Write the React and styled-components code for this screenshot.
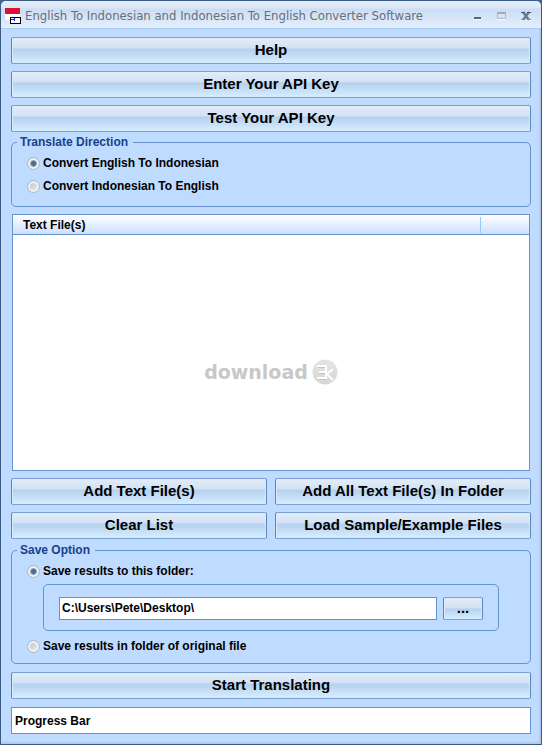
import React, { useState } from 'react'
import styled, { createGlobalStyle } from 'styled-components'

const App = () => {
  const [direction, setDirection] = useState('en-id')
  const [saveMode, setSaveMode] = useState('folder')
  const [folder, setFolder] = useState('C:\\Users\\Pete\\Desktop\\')

  return (
    <>
      <GlobalStyle />
      <Window>
        <TitleBar>
          <FlagIcon />
          <Title>English To Indonesian and Indonesian To English Converter Software</Title>
          <WindowButtons />
        </TitleBar>
        <Content>
          <Stack>
            <Button type='button'>Help</Button>
            <Button type='button'>Enter Your API Key</Button>
            <Button type='button'>Test Your API Key</Button>
          </Stack>

          <DirectionGroup>
            <legend>Translate Direction</legend>
            <RadioLabel>
              <input type='radio' name='direction' checked={direction === 'en-id'} onChange={() => setDirection('en-id')} />
              Convert English To Indonesian
            </RadioLabel>
            <RadioLabel>
              <input type='radio' name='direction' checked={direction === 'id-en'} onChange={() => setDirection('id-en')} />
              Convert Indonesian To English
            </RadioLabel>
          </DirectionGroup>

          <FileList>
            <FileTable>
              <thead>
                <tr>
                  <th scope='col'><span>Text File(s)</span></th>
                  <td />
                </tr>
              </thead>
            </FileTable>
            <Watermark>
              download
              <WatermarkBadge />
            </Watermark>
          </FileList>

          <ButtonGrid>
            <Button type='button'>Add Text File(s)</Button>
            <Button type='button'>Add All Text File(s) In Folder</Button>
            <Button type='button'>Clear List</Button>
            <Button type='button'>Load Sample/Example Files</Button>
          </ButtonGrid>

          <SaveGroup>
            <legend>Save Option</legend>
            <RadioLabel>
              <input type='radio' name='save' checked={saveMode === 'folder'} onChange={() => setSaveMode('folder')} />
              Save results to this folder:
            </RadioLabel>
            <FolderBox>
              <TextInput aria-label='Folder' value={folder} onChange={(e) => setFolder(e.target.value)} />
              <BrowseButton type='button' aria-label='Browse'>...</BrowseButton>
            </FolderBox>
            <RadioLabel>
              <input type='radio' name='save' checked={saveMode === 'original'} onChange={() => setSaveMode('original')} />
              Save results in folder of original file
            </RadioLabel>
          </SaveGroup>

          <Button type='button'>Start Translating</Button>
          <Progress>Progress Bar</Progress>
        </Content>
      </Window>
    </>
  )
}

const FlagIcon = () => (
  <svg width='16' height='16' viewBox='0 0 16 16' shapeRendering='crispEdges' aria-hidden='true'>
    <rect width='15' height='6' fill='#d8142f' />
    <rect y='6' width='15' height='6' fill='#ffffff' />
    <rect x='5.5' y='9.5' width='10' height='6' fill='#ffffff' stroke='#000000' />
    <path d='M6 11.5h3M9.5 10v3' stroke='#1414e6' />
  </svg>
)

const WindowButtons = () => (
  <Controls>
    <button type='button' aria-label='Minimize'>
      <svg width='10' height='10' viewBox='0 0 10 10' shapeRendering='crispEdges'>
        <rect x='1' y='6' width='7' height='2' fill='#53657c' />
        <rect x='1' y='8' width='7' height='1' fill='#ffffff' />
      </svg>
    </button>
    <button type='button' aria-label='Maximize'>
      <svg width='10' height='10' viewBox='0 0 10 10' shapeRendering='crispEdges'>
        <rect x='0.5' y='1.5' width='8' height='6' fill='#d9e3f1' stroke='#b0b9c8' />
        <rect y='1' width='9' height='2' fill='#a5abb8' />
        <rect y='8' width='9' height='1' fill='#ffffff' />
      </svg>
    </button>
    <button type='button' aria-label='Close'>
      <svg width='10' height='10' viewBox='0 0 10 10'>
        <path d='M0 9.5h4M6 9.5h4' stroke='#ffffff' />
        <path d='M2 1l6 8M8 1L2 9' stroke='#627a9a' strokeWidth='2.4' />
        <path d='M0 1.5h4M6 1.5h4' stroke='#4f5a6b' />
        <path d='M0 8.5h4M6 8.5h4' stroke='#7390b5' />
      </svg>
    </button>
  </Controls>
)

const WatermarkBadge = () => (
  <svg width='26' height='26' viewBox='0 0 26 26' role='img' aria-label='3k'>
    <defs>
      <linearGradient id='badge' x1='0' y1='0' x2='0' y2='1'>
        <stop offset='0' stopColor='#e4e4e4' />
        <stop offset='1' stopColor='#d6d6d6' />
      </linearGradient>
    </defs>
    <circle cx='13' cy='13' r='12.5' fill='url(#badge)' />
    <path d='M6 8h8M7 14h7M6 20h8' fill='none' stroke='#c2c2c2' strokeWidth='2' />
    <path d='M5 7h9M7 13h7M5 19h9M14 6v14' fill='none' stroke='#ffffff' strokeWidth='2' />
    <path d='M21 10l-6 5 6 6' fill='none' stroke='#ffffff' strokeWidth='2' />
  </svg>
)

const GlobalStyle = createGlobalStyle`
  * {
    box-sizing: border-box;
  }
  body {
    margin: 0;
    background: #3e628f;
    color: #000000;
    font: bold 12px/16px "Liberation Sans", Arial, sans-serif;
  }
  button, input {
    font: inherit;
    color: inherit;
  }
`

const Window = styled.div`
  display: flex;
  flex-direction: column;
  min-height: 100vh;
  border: 1px solid #3b5a82;
  border-radius: 6px 6px 0 0;
  background: #bfdbff;
  box-shadow: inset -2px -2px 0 #b0cbef;
`

const TitleBar = styled.header`
  display: flex;
  align-items: center;
  height: 28px;
  padding: 2px 10px 0 4px;
  border-bottom: 1px solid #a9cdf0;
  border-radius: 5px 5px 0 0;
  background: linear-gradient(#e6effb 0, #dbe7f8 7px, #cbddf4 8px, #e2eefc 26px);
`

const Title = styled.h1`
  flex: 1;
  margin: 0 0 0 4px;
  color: #6b6e78;
  font: 13px/16px "DejaVu Sans Condensed", Tahoma, sans-serif;
  white-space: nowrap;
`

const Controls = styled.div`
  display: flex;
  gap: 14px;

  button {
    display: flex;
    padding: 0;
    border: 0;
    background: none;
  }
`

const Content = styled.main`
  flex: 1;
  display: flex;
  flex-direction: column;
  padding: 8px 10px 10px;
`

const Stack = styled.div`
  display: grid;
  gap: 7px;
`

const ButtonGrid = styled.div`
  display: grid;
  grid-template-columns: 1fr 1fr;
  gap: 7px 8px;
  margin-top: 7px;
`

const Button = styled.button`
  height: 27px;
  padding: 0 8px 2px;
  border: 1px solid #7b9fd3;
  border-left-color: #5f86bb;
  border-right-color: #5f86bb;
  border-radius: 2px;
  background: linear-gradient(#e3edf9 0, #d2e1f4 10px, #b6d0ee 11px, #d6eeff 100%);
  box-shadow: inset 1px 0 0 #d9eafb, inset -1px 0 0 #d9eafb;
  font-size: 15px;
  line-height: 20px;
`

const BrowseButton = styled(Button)`
  width: 40px;
  height: 23px;
  font-size: 15px;
  line-height: 16px;
`

const Group = styled.fieldset`
  display: flex;
  flex-direction: column;
  margin: 0;
  padding: 0 5px;
  border: 1px solid #6593cf;
  border-radius: 5px;

  legend {
    padding: 0 5px 0 3px;
    color: #15428b;
  }
`

const DirectionGroup = styled(Group)`
  gap: 7px;
  margin-top: 2px;
  padding: 5px 5px 12px;
`

const SaveGroup = styled(Group)`
  margin: 3px 0 8px;
  padding: 5px 5px 9px;
`

const RadioLabel = styled.label`
  display: flex;
  align-items: center;
  gap: 3px;
  padding-left: 10px;

  input {
    appearance: none;
    width: 13px;
    height: 13px;
    margin: 0;
    border: 1px solid #b2b9c2;
    border-radius: 50%;
    background: linear-gradient(135deg, #b4bcc6, #f4f6f8);
    box-shadow: inset 0 0 0 2px #f0f2f4;
  }
  input:checked {
    background: radial-gradient(circle, #3f5f86 0, #55749a 2px, #c5cdd6 4px);
  }
`

const FolderBox = styled.div`
  display: flex;
  gap: 6px;
  margin: 5px 26px 7px;
  padding: 12px 15px 10px;
  border: 1px solid #6593cf;
  border-radius: 5px;
`

const TextInput = styled.input`
  flex: 1;
  min-width: 0;
  height: 23px;
  padding: 0 2px 2px;
  border: 1px solid #6593cf;
  background: #ffffff;
`

const FileList = styled.section`
  flex: 1;
  display: flex;
  flex-direction: column;
  min-height: 160px;
  margin: 7px 1px 0;
  border: 1px solid #6593cf;
  background: #ffffff;
`

const FileTable = styled.table`
  width: 100%;
  border-spacing: 0;

  th, td {
    border-bottom: 1px solid #6593cf;
  }
  tr {
    background: linear-gradient(#ffffff, #c9deff);
  }
  th {
    padding: 2px 0 1px 10px;
    text-align: left;
  }
  th span {
    display: block;
    border-right: 1px solid #99c6ff;
  }
  td {
    width: 48px;
    padding: 0;
  }
`

const Watermark = styled.div`
  flex: 1;
  display: flex;
  align-items: center;
  justify-content: center;
  gap: 4px;
  margin-top: 38px;
  color: #c8c8c8;
  font: bold 19px/26px "DejaVu Sans", sans-serif;
`

const Progress = styled.div`
  height: 27px;
  margin-top: 8px;
  padding: 5px 3px;
  border: 1px solid #6593cf;
  background: #ffffff;
`

export default App
